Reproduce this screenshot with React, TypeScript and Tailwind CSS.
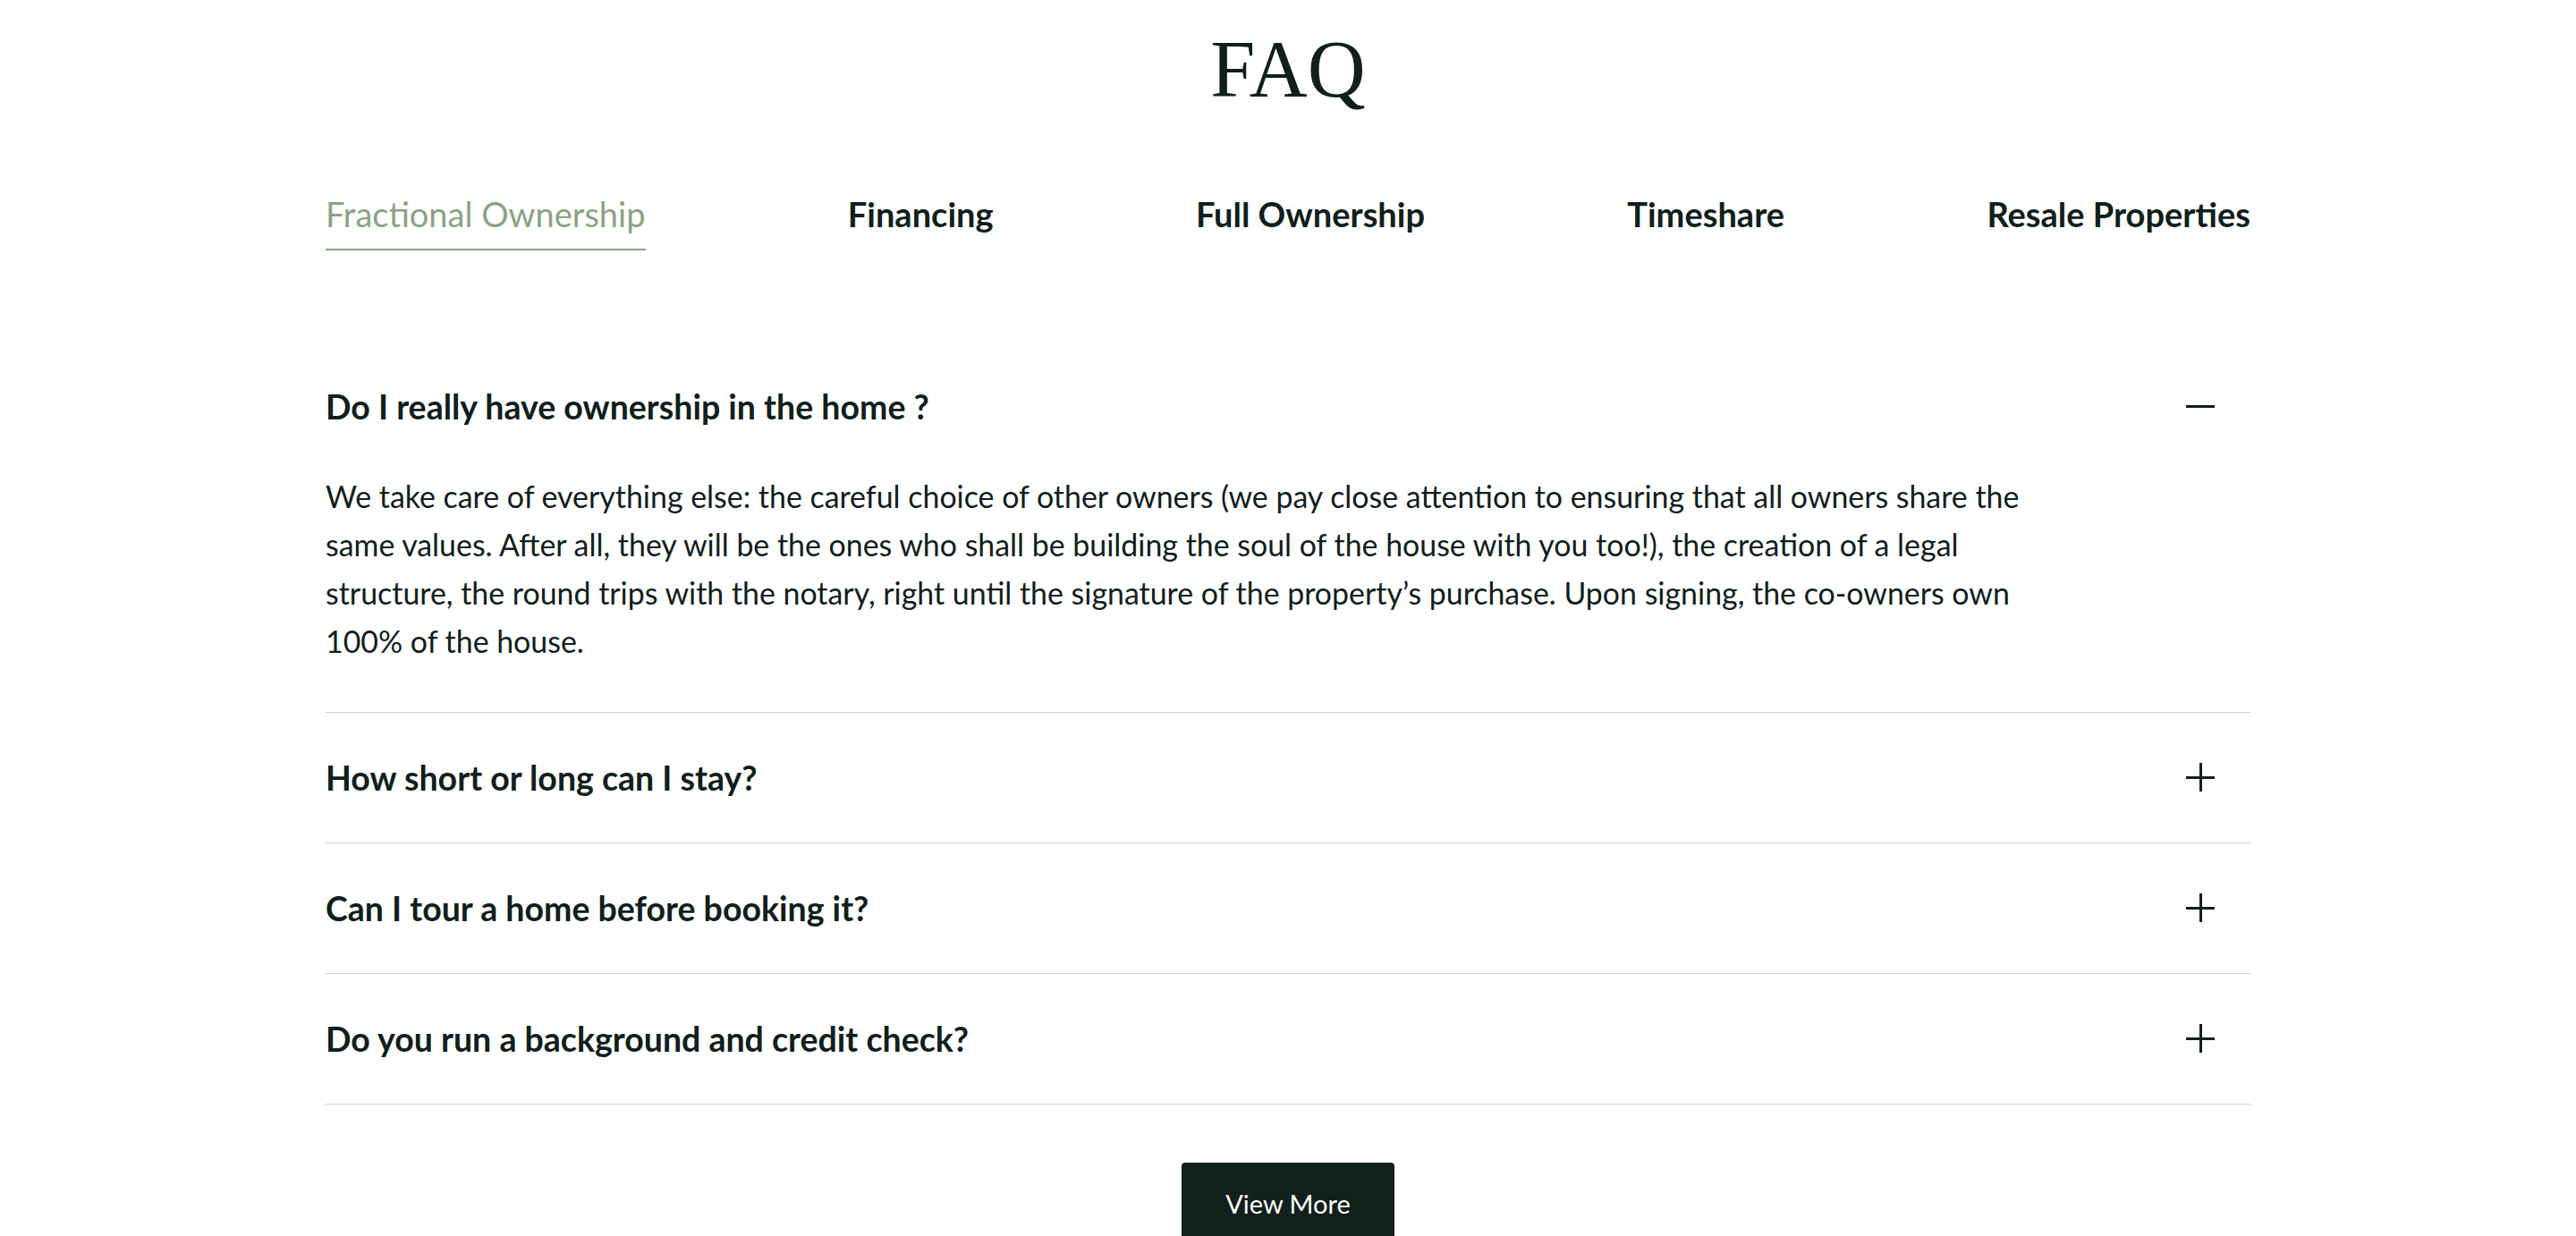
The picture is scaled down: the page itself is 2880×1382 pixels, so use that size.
import React, { useState } from "react";

type Faq = {
  question: string;
  answer: string;
};

const tabs = [
  "Fractional Ownership",
  "Financing",
  "Full Ownership",
  "Timeshare",
  "Resale Properties",
];

const faqs: Faq[] = [
  {
    question: "Do I really have ownership in the home ?",
    answer:
      "We take care of everything else: the careful choice of other owners (we pay close attention to ensuring that all owners share the same values. After all, they will be the ones who shall be building the soul of the house with you too!), the creation of a legal structure, the round trips with the notary, right until the signature of the property\u2019s purchase. Upon signing, the co-owners own 100% of the house.",
  },
  {
    question: "How short or long can I stay?",
    answer:
      "You can stay as short or as long as you like within the weeks allocated to your share, and swap dates with other owners when you need more flexibility.",
  },
  {
    question: "Can I tour a home before booking it?",
    answer:
      "Yes. Our local team can arrange an in-person or video tour of any home before you commit.",
  },
  {
    question: "Do you run a background and credit check?",
    answer:
      "We run a light verification on every buyer to keep the ownership group safe and aligned.",
  },
];

const App = () => {
  const [activeTab, setActiveTab] = useState(0);
  const [open, setOpen] = useState<number | null>(0);

  return (
    <div className="min-h-screen bg-white text-[#10201b] font-['Lato',sans-serif]">
      <div className="w-[2152px] mx-auto">
        <h1 className="pt-[33px] text-center font-['Liberation_Serif',serif] text-[90px] leading-none font-normal">
          FAQ
        </h1>

        <div className="mt-[94px] flex justify-between">
          {tabs.map((tab, i) => (
            <button
              key={tab}
              onClick={() => setActiveTab(i)}
              className={
                i === activeTab
                  ? "pb-[15px] border-b-2 border-[#8aa384] text-[#8aa384] text-[38px] leading-[1.2] font-normal"
                  : "pb-[17px] text-[#10201b] text-[38px] leading-[1.2] font-bold"
              }
            >
              {tab}
            </button>
          ))}
        </div>

        <div className="mt-[102px]">
          {faqs.map((faq, i) => (
            <div key={faq.question} className="border-b border-[#cbd5dc]">
              <button
                onClick={() => setOpen(open === i ? null : i)}
                className="w-full flex items-center justify-between py-[50px] pr-[40px] text-left"
              >
                <span className="text-[37.5px] leading-[1.2] font-bold">
                  {faq.question}
                </span>
                <span className="relative w-[32px] h-[32px] flex items-center justify-center">
                  <span className="absolute w-[32px] h-[3px] bg-[#10201b]" />
                  {open !== i && (
                    <span className="absolute w-[3px] h-[32px] bg-[#10201b]" />
                  )}
                </span>
              </button>
              {open === i && (
                <p className="pt-px pb-[52px] max-w-[1910px] text-[33.9px] leading-[54px]">
                  {faq.answer}
                </p>
              )}
            </div>
          ))}
        </div>

        <div className="mt-[65px] flex justify-center">
          <button className="w-[238px] h-[92px] rounded-[4px] bg-[#12201b] text-white text-[29px]">
            View More
          </button>
        </div>
      </div>
    </div>
  );
};

export default App;
